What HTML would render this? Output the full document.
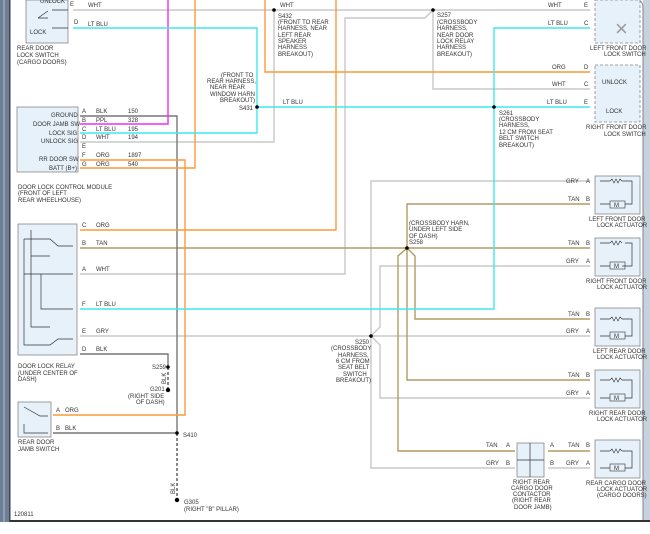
<!DOCTYPE html>
<html><head><meta charset="utf-8"><style>
html,body{margin:0;padding:0;background:#fff;width:650px;height:534px;overflow:hidden}
svg{display:block}
text{font-family:"Liberation Sans",sans-serif;font-size:6px;fill:#333}
</style></head><body>
<svg width="650" height="534" viewBox="0 0 650 534" xmlns="http://www.w3.org/2000/svg">
<rect x="0" y="0" width="650" height="534" fill="#fff"/>
<rect x="0" y="0" width="9" height="522" fill="#6e7e94"/>
<rect x="3" y="0" width="2" height="522" fill="#8fa0b5"/>
<rect x="9" y="0" width="1.5" height="522" fill="#3c4656"/>
<rect x="643" y="0" width="7" height="522" fill="#c9d1dc"/>
<line x1="643" y1="8" x2="643" y2="522" stroke="#7a8595" stroke-width="1"/>
<path d="M636 0 Q643 0 643 8" fill="none" stroke="#7a8595"/>
<rect x="10" y="520" width="640" height="2" fill="#333"/>

<!-- boxes -->
<g fill="#e6f1fa" stroke="#888" stroke-width="0.8">
<rect x="26" y="0" width="42" height="43"/>
<rect x="17" y="107" width="61" height="65"/>
<rect x="18" y="224" width="59" height="131"/>
<rect x="18" y="402" width="33" height="35"/>
<rect x="595" y="176" width="45" height="38"/>
<rect x="595" y="238" width="45" height="38"/>
<rect x="595" y="308" width="45" height="38"/>
<rect x="595" y="370" width="45" height="38"/>
<rect x="595" y="440" width="45" height="38"/>
<rect x="517" y="443" width="27" height="34"/>
</g>
<g fill="#e6f1fa" stroke="#888" stroke-width="0.8" stroke-dasharray="3,2">
<rect x="595" y="0" width="45" height="43"/>
<rect x="595" y="65" width="45" height="57"/>
</g>
<text x="615" y="36" font-size="22" fill="#999" style="font-size:22px;fill:#9a9a9a">×</text>

<g fill="none" stroke-width="1.4">
<!-- gray light wires -->
<g stroke="#c8c8c8">
<path d="M73 10 H590"/>
<path d="M80 142 H274 V10"/>
<path d="M80 274 H345 V18 H425 L433 10"/>
<path d="M433 10 V89 H590"/>
<path d="M80 336 H590"/>
<path d="M590 181 H371 V468 H515"/>
<path d="M590 266 H380 V327 L371 336 L380 345 V398 H590"/>
<path d="M548 468 H590"/>
</g>
<!-- tan -->
<g stroke="#b49a62">
<path d="M80 248 H590"/>
<path d="M590 204 H407 V380 H590"/>
<path d="M407 248 L415 256 V319 H590"/>
<path d="M407 248 L398 256 V451 H515"/>
<path d="M548 451 H590"/>
</g>
<!-- blk -->
<g stroke="#777">
<path d="M80 116 H177 V433"/>
<path d="M80 354 H168 V367"/>
<path d="M53 433 H177"/>
</g>
<g stroke="#555" stroke-dasharray="3,2">
<path d="M168 367 V390"/>
<path d="M177 433 V498"/>
</g>
<!-- pink -->
<path d="M80 124 H168 V0" stroke="#f02ef0"/>
<!-- orange -->
<g stroke="#fa9a3c">
<path d="M80 168 H195 V0"/>
<path d="M80 160 H185 V415 H53"/>
<path d="M80 230 H336 V0"/>
<path d="M265 0 V72 H590"/>
</g>
<!-- cyan -->
<g stroke="#3ee8ee">
<path d="M73 28 H257 V133 H80"/>
<path d="M257 107 H590"/>
<path d="M590 28 H494 V309 H80"/>
</g>
</g>

<!-- dots -->
<g fill="#000">
<circle cx="274" cy="10" r="1.8"/><circle cx="433" cy="10" r="1.8"/>
<circle cx="257" cy="107" r="1.8"/><circle cx="494" cy="107" r="1.8"/>
<circle cx="407" cy="248" r="1.8"/><circle cx="371" cy="336" r="1.8"/>
<circle cx="168" cy="367" r="1.8"/><circle cx="177" cy="433" r="1.8"/>
<circle cx="168" cy="390" r="2.2"/><circle cx="177" cy="500" r="2.2"/>
</g>

<!-- inner component lines -->
<g fill="none" stroke="#333" stroke-width="0.7">
<path d="M38 18 L48 11 M52 10 H68 M38 18 H48 M52 28 H68 M38 18 V18"/>
<path d="M31 230 V327 H50 M24 239 V345 H50 M24 239 H50 L58 246 H73 M31 256 H50 M24 274 H73 M41 274 V309 H73 M31 327 H50 M24 345 H50 L58 339 H73"/>
<path d="M24 407 L40 416 H48 M24 424 V433 H48"/>
<path d="M600 181 H610 M622 181 H632 V204 H625 M600 204 H610 M600 266 H610 M622 266 H632 V243 H625 M600 243 H610"/>
<path d="M600 319 H610 M622 319 H632 V336 H625 M600 336 H610 M600 380 H610 M622 380 H632 V398 H625 M600 398 H610"/>
<path d="M600 451 H610 M622 451 H632 V468 H625 M600 468 H610"/>
<path d="M530 443 V477 M517 460 H544"/>
</g>
<g fill="none" stroke="#333" stroke-width="0.6">
<path d="M610 181 l2 -2 l2 4 l2 -4 l2 4 l2 -4 l2 2"/>
<path d="M610 243 l2 -2 l2 4 l2 -4 l2 4 l2 -4 l2 2"/>
<path d="M610 319 l2 -2 l2 4 l2 -4 l2 4 l2 -4 l2 2"/>
<path d="M610 380 l2 -2 l2 4 l2 -4 l2 4 l2 -4 l2 2"/>
<path d="M610 451 l2 -2 l2 4 l2 -4 l2 4 l2 -4 l2 2"/>
<rect x="610" y="201" width="15" height="7"/><rect x="610" y="262" width="15" height="7"/>
<rect x="610" y="332" width="15" height="7"/><rect x="610" y="394" width="15" height="7"/>
<rect x="610" y="464" width="15" height="7"/>
</g>
<g style="font-size:6px">
<text x="614" y="207">M</text><text x="614" y="268">M</text><text x="614" y="338">M</text><text x="614" y="400">M</text><text x="614" y="470">M</text>
</g>

<!-- labels -->
<text x="40" y="3">UNLOCK</text><text x="30" y="34">LOCK</text>
<text x="70" y="6">E</text><text x="88" y="7">WHT</text>
<text x="74" y="24">D</text><text x="88" y="26">LT BLU</text>
<text x="17" y="50">REAR DOOR</text><text x="17" y="57">LOCK SWITCH</text><text x="17" y="64">(CARGO DOORS)</text>
<text x="280" y="7">WHT</text>
<text x="278" y="18">S432</text><text x="278" y="24">(FRONT TO REAR</text><text x="278" y="30">HARNESS, NEAR</text><text x="278" y="37">LEFT REAR</text><text x="278" y="43">SPEAKER</text><text x="278" y="49">HARNESS</text><text x="278" y="56">BREAKOUT)</text>
<text x="437" y="17">S257</text><text x="437" y="24">(CROSSBODY</text><text x="437" y="30">HARNESS,</text><text x="437" y="37">NEAR DOOR</text><text x="437" y="43">LOCK RELAY</text><text x="437" y="49">HARNESS</text><text x="437" y="56">BREAKOUT)</text>
<text x="548" y="7">WHT</text><text x="584" y="7">E</text>
<text x="548" y="25">LT BLU</text><text x="584" y="25">C</text>
<text x="590" y="50">LEFT FRONT DOOR</text><text x="604" y="56">LOCK SWITCH</text>
<text x="552" y="69">ORG</text><text x="584" y="69">D</text>
<text x="552" y="86">WHT</text><text x="584" y="86">C</text>
<text x="547" y="104">LT BLU</text><text x="584" y="104">E</text>
<text x="602" y="84">UNLOCK</text><text x="606" y="113">LOCK</text>
<text x="586" y="129">RIGHT FRONT DOOR</text><text x="604" y="136">LOCK SWITCH</text>
<text x="499" y="115">S261</text><text x="499" y="121">(CROSSBODY</text><text x="499" y="127">HARNESS,</text><text x="499" y="134">12 CM FROM SEAT</text><text x="499" y="140">BELT SWITCH</text><text x="499" y="147">BREAKOUT)</text>
<text x="221" y="77">(FRONT TO</text><text x="207" y="83">REAR HARNESS,</text><text x="210" y="89">NEAR REAR</text><text x="210" y="96">WINDOW HARN</text><text x="220" y="102">BREAKOUT)</text><text x="239" y="110">S431</text>
<text x="283" y="104">LT BLU</text>
<text x="51" y="117">GROUND</text><text x="33" y="126">DOOR JAMB SW</text><text x="49" y="135">LOCK SIG</text><text x="41" y="143">UNLOCK SIG</text><text x="39" y="161">RR DOOR SW</text><text x="49" y="170">BATT (B+)</text>
<text x="82" y="113">A</text><text x="82" y="122">B</text><text x="82" y="131">C</text><text x="82" y="139">D</text><text x="82" y="148">E</text><text x="82" y="157">F</text><text x="82" y="166">G</text>
<text x="96" y="113">BLK</text><text x="96" y="122">PPL</text><text x="96" y="131">LT BLU</text><text x="96" y="139">WHT</text><text x="96" y="157">ORG</text><text x="96" y="166">ORG</text>
<text x="128" y="113">150</text><text x="128" y="122">328</text><text x="128" y="131">195</text><text x="128" y="139">194</text><text x="128" y="157">1897</text><text x="128" y="166">540</text>
<text x="18" y="189">DOOR LOCK CONTROL MODULE</text><text x="18" y="195">(FRONT OF LEFT</text><text x="18" y="202">REAR WHEELHOUSE)</text>
<text x="82" y="227">C</text><text x="96" y="227">ORG</text>
<text x="82" y="245">B</text><text x="96" y="245">TAN</text>
<text x="82" y="271">A</text><text x="96" y="271">WHT</text>
<text x="82" y="306">F</text><text x="96" y="306">LT BLU</text>
<text x="82" y="333">E</text><text x="96" y="333">GRY</text>
<text x="82" y="351">D</text><text x="96" y="351">BLK</text>
<text x="18" y="368">DOOR LOCK RELAY</text><text x="18" y="375">(UNDER CENTER OF</text><text x="18" y="381">DASH)</text>
<text x="152" y="369">S259</text><text x="150" y="391">G201</text><text x="128" y="398">(RIGHT SIDE</text><text x="136" y="404">OF DASH)</text>
<text x="56" y="412">A</text><text x="65" y="412">ORG</text><text x="56" y="430">B</text><text x="65" y="430">BLK</text>
<text x="18" y="444">REAR DOOR</text><text x="18" y="451">JAMB SWITCH</text>
<text x="183" y="437">S410</text>
<text x="184" y="504">G305</text><text x="184" y="511">(RIGHT "B" PILLAR)</text>
<text x="14" y="516">120811</text>
<text x="409" y="225">(CROSSBODY HARN,</text><text x="409" y="231">UNDER LEFT SIDE</text><text x="409" y="238">OF DASH)</text><text x="409" y="244">S258</text>
<text x="355" y="344">S250</text><text x="331" y="350">(CROSSBODY</text><text x="338" y="357">HARNESS,</text><text x="336" y="363">6 CM FROM</text><text x="338" y="369">SEAT BELT</text><text x="343" y="376">SWITCH</text><text x="336" y="382">BREAKOUT)</text>
<text x="566" y="183">GRY</text><text x="586" y="183">A</text><text x="568" y="201">TAN</text><text x="586" y="201">B</text>
<text x="589" y="221">LEFT FRONT DOOR</text><text x="597" y="227">LOCK ACTUATOR</text>
<text x="568" y="245">TAN</text><text x="586" y="245">B</text><text x="566" y="263">GRY</text><text x="586" y="263">A</text>
<text x="586" y="283">RIGHT FRONT DOOR</text><text x="597" y="289">LOCK ACTUATOR</text>
<text x="568" y="316">TAN</text><text x="586" y="316">B</text><text x="566" y="333">GRY</text><text x="586" y="333">A</text>
<text x="593" y="353">LEFT REAR DOOR</text><text x="597" y="359">LOCK ACTUATOR</text>
<text x="568" y="377">TAN</text><text x="586" y="377">B</text><text x="566" y="395">GRY</text><text x="586" y="395">A</text>
<text x="589" y="415">RIGHT REAR DOOR</text><text x="597" y="421">LOCK ACTUATOR</text>
<text x="486" y="447">TAN</text><text x="506" y="447">A</text><text x="486" y="465">GRY</text><text x="506" y="465">B</text>
<text x="550" y="447">A</text><text x="568" y="447">TAN</text><text x="586" y="447">B</text>
<text x="550" y="465">B</text><text x="566" y="465">GRY</text><text x="586" y="465">A</text>
<text x="586" y="485">REAR CARGO DOOR</text><text x="597" y="491">LOCK ACTUATOR</text><text x="597" y="497">(CARGO DOORS)</text>
<text x="513" y="484">RIGHT REAR</text><text x="511" y="490">CARGO DOOR</text><text x="513" y="496">CONTACTOR</text><text x="512" y="502">(RIGHT REAR</text><text x="514" y="509">DOOR JAMB)</text>
</g>
<text transform="translate(166,384) rotate(-90)">BLK</text>
<text transform="translate(175,494) rotate(-90)">BLK</text>
</svg>
</body></html>
